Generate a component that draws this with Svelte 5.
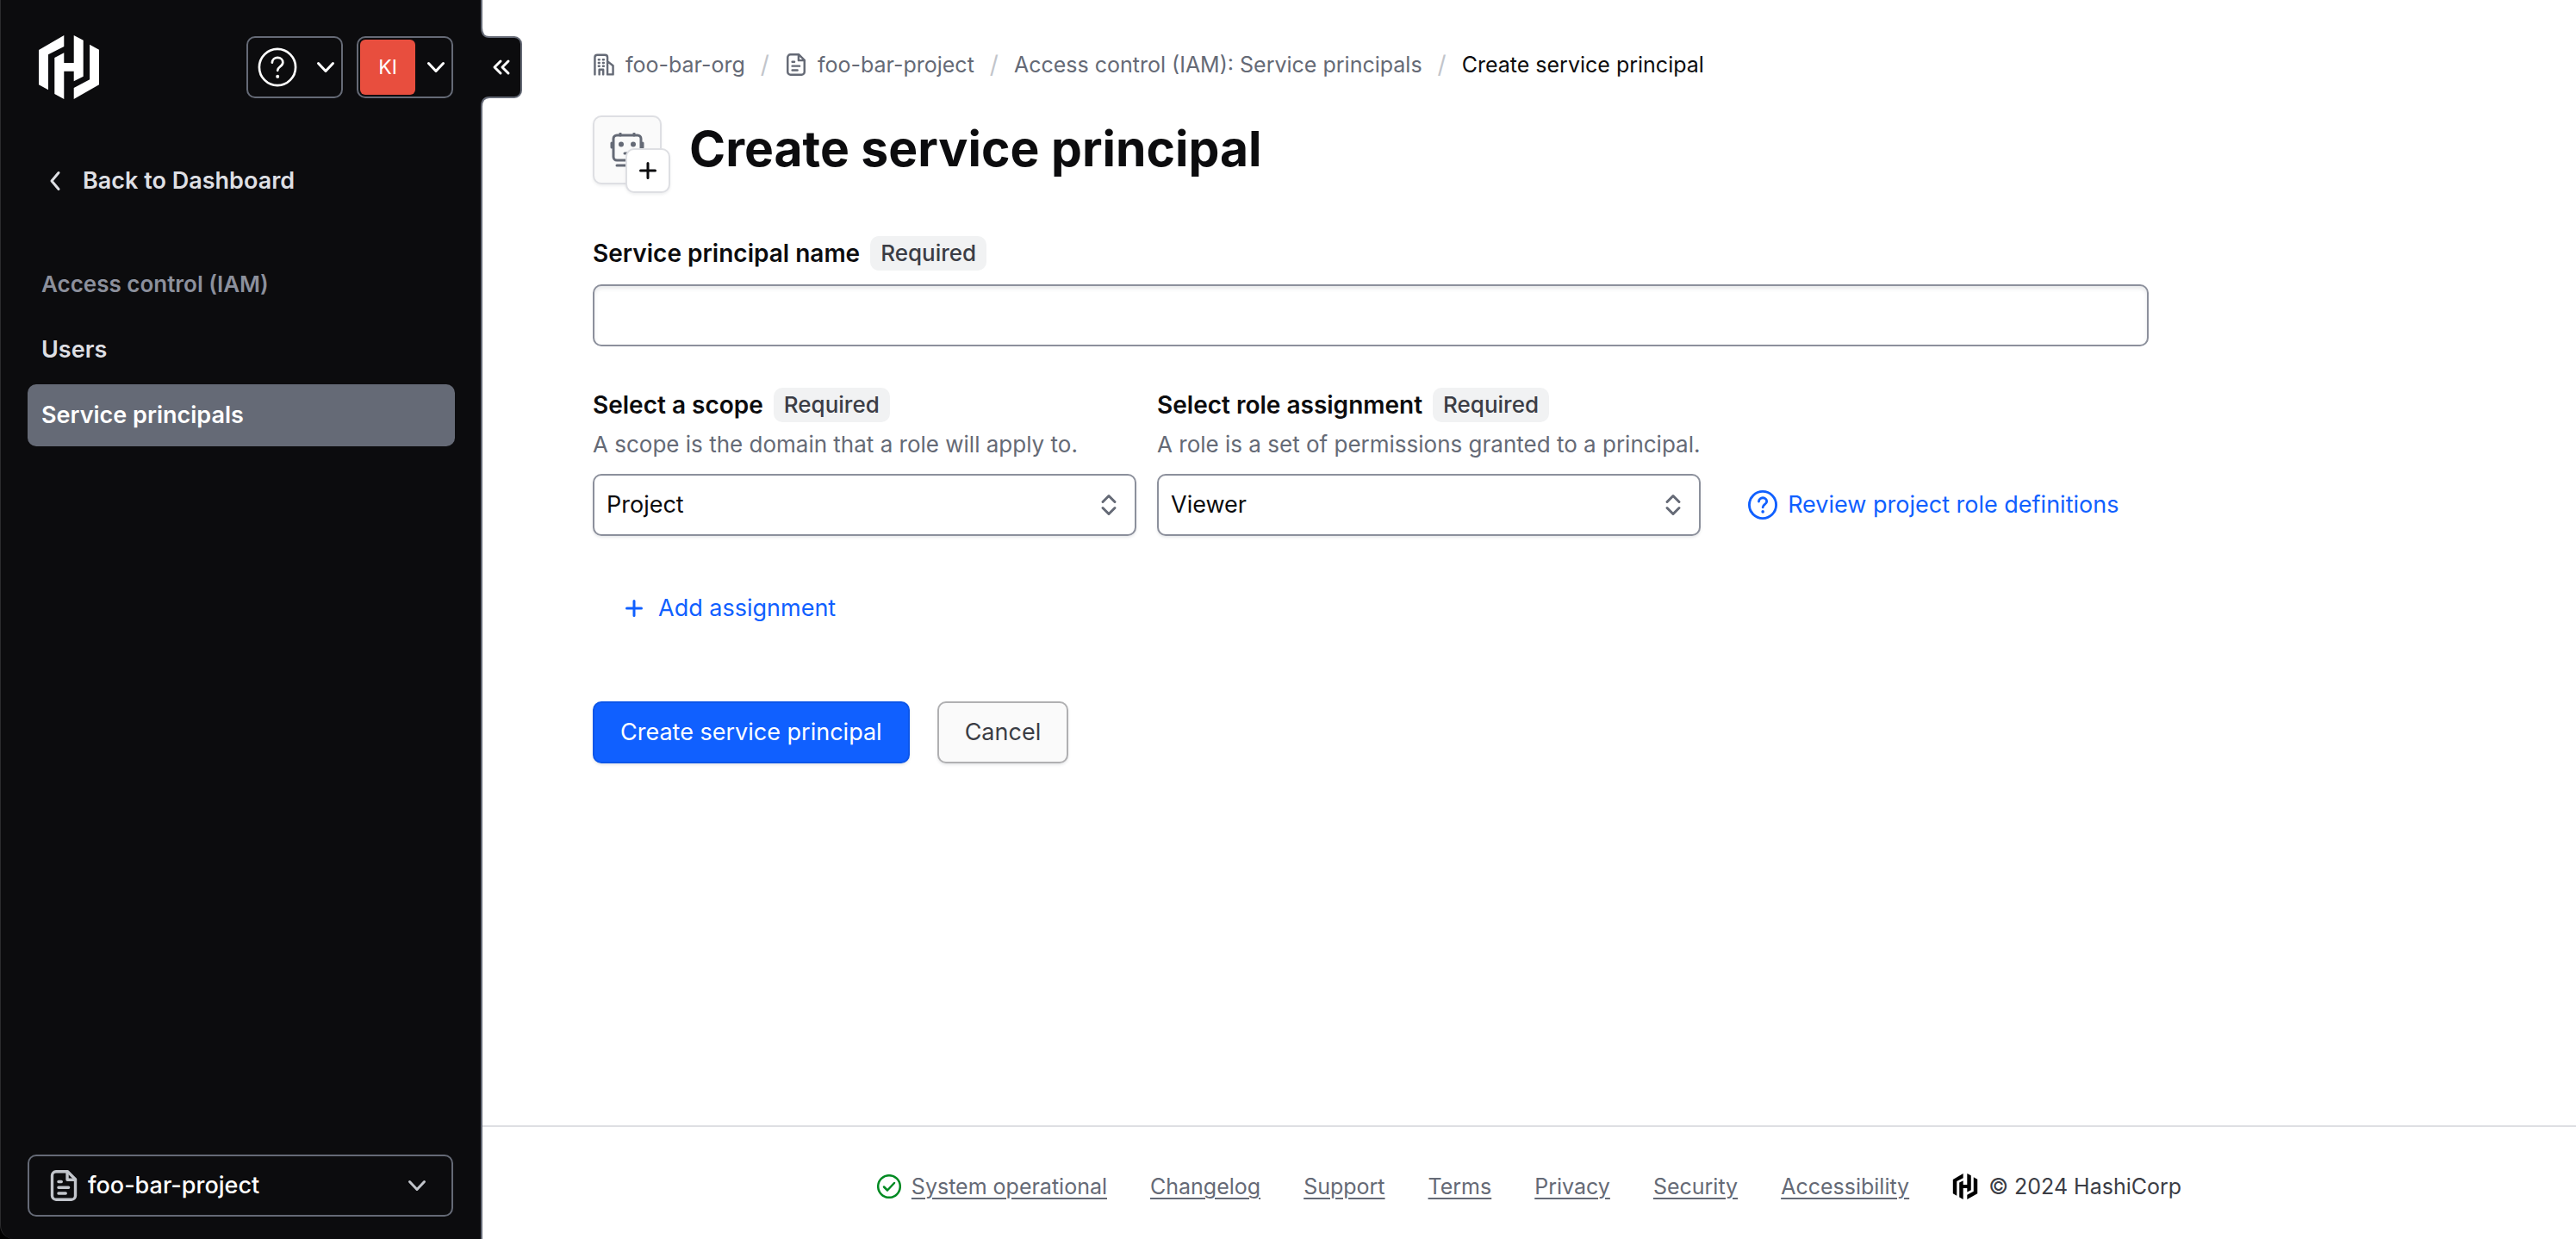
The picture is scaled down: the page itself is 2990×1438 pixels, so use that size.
<script>
  const footerLinks = ['Changelog', 'Support', 'Terms', 'Privacy', 'Security', 'Accessibility'];
  let name = $state('');
  let scope = $state('Project');
  let role = $state('Viewer');
</script>

{#snippet chevron()}
  <svg class="chevron" viewBox="0 0 24 24" aria-hidden="true"><path d="M3.5 7.5 12 16.5l8.5-9" /></svg>
{/snippet}

{#snippet logo()}
  <path d="M29.3 0 0 17v40.3l11 6V22.3L29.3 13z" />
  <path d="M18.3 26l11-5.7V32h11.4V0l11 5.7v42l-11 5.6V41.7H29.3V74l-11-6z" />
  <path d="M59.1 10.7l11 6v40.6L40.7 74V61l18.4-9.7z" />
{/snippet}

{#snippet fileIcon()}
  <path d="M10 .8H4C2.900.8 2 1.7 2 2.8v10.4c0 1.1.9 2 2 2h8c1.1 0 2-.9 2-2V4.8z" />
  <path d="M9.8 1v4H14M5.3 6h1.5M5.3 9h5.2M5.3 12H9" />
{/snippet}

{#snippet helpIcon()}
  <circle cx="12" cy="12" r="11" />
  <path d="M8.8 9.2c.1-1.8 1.5-3 3.3-3s3.2 1.2 3.2 2.9c0 2.5-3.2 2.5-3.2 4.9" />
  <path class="dot" d="M12.1 17.5v.2" />
{/snippet}

{#snippet selector()}
  <svg class="updown" viewBox="0 0 32 32" aria-hidden="true"><path d="M9 12.500l7-7 7 7M9 19.500l7 7 7-7" /></svg>
{/snippet}

<div class="app">
  <aside class="sidebar">
    <div class="top">
      <a class="home" href="#home" aria-label="HashiCorp home">
        <svg viewBox="0 0 70 74" aria-hidden="true">{@render logo()}</svg>
      </a>
      <button class="menu help" type="button" aria-label="Help menu">
        <svg class="help-icon" viewBox="0 0 24 24" aria-hidden="true">{@render helpIcon()}</svg>
        {@render chevron()}
      </button>
      <button class="menu user" type="button" aria-label="User menu">
        <span class="avatar">KI</span>
        {@render chevron()}
      </button>
    </div>

    <button class="toggle" type="button" aria-label="Close menu">
      <svg class="tab" viewBox="0 0 48 92" aria-hidden="true">
        <path class="fill" d="M0 0h1c0 7 3 11 9 11h29a8 8 0 0 1 8 8v54a8 8 0 0 1-8 8H10c-6 0-9 4-9 11H0z" />
        <path class="edge" d="M1 0c0 7 3 11 9 11h29a8 8 0 0 1 8 8v54a8 8 0 0 1-8 8H10c-6 0-9 4-9 11" />
        <path class="arrows" d="M23 39l-7 7 7 7M32 39l-7 7 7 7" />
      </svg>
    </button>

    <nav aria-label="Main">
      <a class="item back" href="#dashboard">
        <svg viewBox="0 0 24 24" aria-hidden="true"><path d="M16 2.5 8 12l8 9.5" /></svg>
        Back to Dashboard
      </a>
      <h2 class="item">Access control (IAM)</h2>
      <a class="item" href="#users">Users</a>
      <a class="item active" href="#service-principals" aria-current="page">Service principals</a>
    </nav>

    <button class="project" type="button">
      <svg class="file" viewBox="0 0 16 16" aria-hidden="true">{@render fileIcon()}</svg>
      <span>foo-bar-project</span>
      {@render chevron()}
    </button>
  </aside>

  <div class="page">
    <main>
      <nav class="crumbs" aria-label="Breadcrumb">
        <a href="#org">
          <svg viewBox="0 0 16 16" aria-hidden="true">
            <path d="M1.5 15V2.8C1.5 1.8 2.2 1.1 3.2 1.1h5.6c1 0 1.7.7 1.7 1.7V15M10.5 6.2h.8l3.2 2.6V15h-4M4.7 15v-3.5h2.8V15" />
            <path d="M4.2 4.5h.6M7.3 4.5h.6M4.2 6.8h.6M7.3 6.8h.6M4.2 9.1h.6M7.3 9.1h.6" />
          </svg>
          foo-bar-org
        </a>
        <span class="slash">/</span>
        <a href="#project">
          <svg viewBox="0 0 16 16" aria-hidden="true">{@render fileIcon()}</svg>
          foo-bar-project
        </a>
        <span class="slash">/</span>
        <a href="#iam">Access control (IAM): Service principals</a>
        <span class="slash">/</span>
        <span class="current" aria-current="page">Create service principal</span>
      </nav>

      <header class="title">
        <div class="tile">
          <div class="robot">
            <svg viewBox="0 0 40 40" aria-hidden="true">
              <rect x="4" y="3" width="32" height="29" rx="4" />
              <path d="M2 12v5M38 12v5M12 1v2M28 1v2M17 24h6M8 38h24" />
              <circle cx="13" cy="13.5" r="1.5" />
              <circle cx="27" cy="13.5" r="1.5" />
            </svg>
          </div>
          <div class="plus">
            <svg viewBox="0 0 24 24" aria-hidden="true"><path d="M12 3.5v17M3.5 12h17" /></svg>
          </div>
        </div>
        <h1>Create service principal</h1>
      </header>

      <form>
        <div class="field">
          <div class="label"><label for="name">Service principal name</label><span class="badge">Required</span></div>
          <input id="name" type="text" bind:value={name} />
        </div>

        <div class="roles">
          <div class="field">
            <div class="label"><label for="scope">Select a scope</label><span class="badge">Required</span></div>
            <p id="scope-hint">A scope is the domain that a role will apply to.</p>
            <div class="select">
              <select id="scope" aria-describedby="scope-hint" bind:value={scope}>
                <option>Project</option>
                <option>Organization</option>
              </select>
              {@render selector()}
            </div>
          </div>
          <div class="field">
            <div class="label"><label for="role">Select role assignment</label><span class="badge">Required</span></div>
            <p id="role-hint">A role is a set of permissions granted to a principal.</p>
            <div class="select">
              <select id="role" aria-describedby="role-hint" bind:value={role}>
                <option>Viewer</option>
                <option>Contributor</option>
                <option>Admin</option>
              </select>
              {@render selector()}
            </div>
          </div>
          <a class="review" href="#roles">
            <svg viewBox="0 0 24 24" aria-hidden="true">{@render helpIcon()}</svg>
            Review project role definitions
          </a>
        </div>

        <button class="add" type="button">
          <svg viewBox="0 0 24 24" aria-hidden="true"><path d="M12 3.5v17M3.5 12h17" /></svg>
          Add assignment
        </button>

        <div class="actions">
          <button class="btn primary" type="submit">Create service principal</button>
          <button class="btn" type="button">Cancel</button>
        </div>
      </form>
    </main>

    <footer>
      <a class="status" href="#status">
        <svg viewBox="0 0 28 28" aria-hidden="true"><circle cx="14" cy="14" r="12.8" /><path d="M8 14.5l4 4 8-8.5" /></svg>
        <span>System operational</span>
      </a>
      {#each footerLinks as link}
        <a href="#{link.toLowerCase()}">{link}</a>
      {/each}
      <span class="copyright">
        <svg viewBox="0 0 70 74" aria-hidden="true">{@render logo()}</svg>
        © 2024 HashiCorp
      </span>
    </footer>
  </div>
</div>

<style>
  :global(body) {
    margin: 0;
    background: #fff;
  }

  .app {
    display: flex;
    min-height: 100vh;
    background: #000;
    font-family: Inter, 'Liberation Sans', sans-serif;
    font-size: 27px;
    line-height: 36px;
    color: #0c0c0e;
  }

  .app :is(*, *::before) {
    box-sizing: border-box;
  }

  svg {
    display: block;
    flex: none;
    fill: none;
    stroke: currentColor;
    stroke-linecap: round;
    stroke-linejoin: round;
  }

  a {
    color: inherit;
    text-decoration: none;
  }

  button,
  input,
  select {
    margin: 0;
    font: inherit;
    color: inherit;
  }

  button {
    cursor: pointer;
  }

  .dot {
    stroke-width: 2.5;
  }

  /* Sidebar */
  .sidebar {
    position: relative;
    display: flex;
    flex: none;
    flex-direction: column;
    width: 560px;
    padding: 42px 32px 26px 31px;
    border-right: 2px solid #656a76;
    border-left: 1px solid #2b2b2d;
    border-bottom-left-radius: 16px;
    background: #0c0c0e;
    color: #dedfe3;
  }

  .top {
    display: flex;
    gap: 16px;
    align-items: center;
    height: 72px;
    padding-left: 13px;
  }

  .home {
    margin-right: auto;
    color: #fff;
  }

  .home svg {
    width: 70px;
    height: 74px;
    fill: currentColor;
    stroke: none;
  }

  .menu {
    display: flex;
    align-items: center;
    justify-content: space-between;
    width: 112px;
    height: 72px;
    padding: 0 6px 0 11px;
    border: 2px solid #656a76;
    border-radius: 10px;
    background: none;
    color: #fff;
  }

  .user {
    padding-left: 2px;
  }

  .help-icon {
    width: 46px;
    height: 46px;
    stroke-width: 1.4;
  }

  .help-icon .dot {
    stroke-width: 2;
  }

  .chevron {
    width: 24px;
    height: 24px;
    stroke-width: 3;
  }

  .avatar {
    display: grid;
    place-items: center;
    width: 64px;
    height: 64px;
    border-radius: 6px;
    background: #e84e3e;
    font-size: 23px;
  }

  .toggle {
    position: absolute;
    top: 32px;
    left: 557px;
    padding: 0;
    border: 0;
    background: none;
    color: #fff;
  }

  .tab {
    width: 48px;
    height: 92px;
    stroke-width: 2;
  }

  .tab .fill {
    fill: #0c0c0e;
    stroke: none;
  }

  .tab .edge {
    stroke: #656a76;
  }

  .tab .arrows {
    stroke-width: 3;
  }

  .sidebar nav {
    display: flex;
    flex: 1;
    flex-direction: column;
    gap: 4px;
    padding-top: 60px;
  }

  .item {
    display: flex;
    align-items: center;
    height: 72px;
    margin: 0;
    padding: 0 16px;
    border-radius: 10px;
    font-size: 27px;
    font-weight: 600;
    white-space: nowrap;
  }

  .back {
    gap: 20px;
    margin-bottom: 44px;
    padding-left: 20px;
  }

  .back svg {
    width: 24px;
    height: 24px;
    stroke-width: 3;
  }

  h2.item {
    color: #8c909c;
    font-size: 26px;
  }

  .active {
    margin-right: -2px;
    background: #656a76;
    color: #fff;
  }

  .project {
    display: flex;
    align-items: center;
    height: 72px;
    padding: 0 28px 0 22px;
    border: 2px solid #656a76;
    border-radius: 10px;
    background: none;
    color: #c2c5cb;
  }

  .project span {
    flex: 1;
    color: #fff;
    font-weight: 500;
    text-align: left;
  }

  .file {
    width: 36px;
    height: 36px;
    margin-right: 10px;
    stroke-width: 1.5;
  }

  /* Page */
  .page {
    display: flex;
    flex: 1;
    flex-direction: column;
    min-width: 0;
    background: #fff;
  }

  main {
    flex: 1;
    max-width: 2062px;
    padding: 56px 128px;
  }

  .crumbs {
    display: flex;
    gap: 18px;
    align-items: center;
    height: 38px;
    color: #656a76;
    font-size: 25px;
    white-space: nowrap;
  }

  .crumbs a {
    display: flex;
    gap: 12px;
    align-items: center;
  }

  .crumbs svg {
    width: 26px;
    height: 26px;
    stroke-width: 1.5;
  }

  .slash {
    color: #c2c5cb;
    font-size: 28px;
  }

  .current {
    color: #0c0c0e;
  }

  .title {
    display: flex;
    gap: 22px;
    margin: 40px 0 50px;
  }

  .tile {
    position: relative;
    width: 90px;
    height: 90px;
  }

  .robot,
  .plus {
    display: grid;
    place-items: center;
    border: 2px solid #dedfe3;
    border-radius: 10px;
    box-shadow: 0 2px 3px #656a761a;
  }

  .robot {
    width: 80px;
    height: 80px;
    background: #fafafa;
    color: #656a76;
  }

  .robot svg {
    width: 40px;
    height: 40px;
    stroke-width: 3;
  }

  .plus {
    position: absolute;
    right: 0;
    bottom: 0;
    width: 52px;
    height: 52px;
    background: #fff;
  }

  .plus svg {
    width: 24px;
    height: 24px;
    stroke-width: 3;
  }

  h1 {
    margin: 0;
    font-size: 57px;
    font-weight: 700;
    line-height: 78px;
  }

  form,
  .field {
    display: flex;
    flex-direction: column;
  }

  form {
    gap: 48px;
  }

  .label {
    display: flex;
    gap: 12px;
    align-items: center;
    height: 40px;
    margin-bottom: 16px;
    font-size: 28px;
    font-weight: 600;
    white-space: nowrap;
  }

  .badge {
    padding: 2px 12px;
    border-radius: 10px;
    background: #f1f2f3;
    color: #3b3d45;
    font-size: 26px;
    font-weight: 500;
  }

  input,
  select {
    width: 100%;
    height: 72px;
    padding: 0 14px;
    border: 2px solid #8c909c;
    border-radius: 10px;
    background: #fff;
  }

  input {
    box-shadow: inset 0 3px 4px #656a7626;
  }

  select {
    appearance: none;
    box-shadow: 0 2px 3px #656a7626;
  }

  .roles {
    display: grid;
    grid-template-columns: 14fr 14fr 11fr;
    gap: 24px;
  }

  .roles .label {
    margin-bottom: 8px;
  }

  p {
    margin: 0 0 16px;
    color: #656a76;
    font-size: 26px;
    white-space: nowrap;
  }

  .select {
    position: relative;
  }

  .updown {
    position: absolute;
    top: 20px;
    right: 16px;
    width: 32px;
    height: 32px;
    color: #656a76;
    stroke-width: 3;
    pointer-events: none;
  }

  .review {
    display: flex;
    gap: 12px;
    align-items: center;
    align-self: end;
    height: 72px;
    padding-left: 31px;
    color: #1060ff;
    white-space: nowrap;
  }

  .review svg {
    width: 34px;
    height: 34px;
    stroke-width: 2;
  }

  .add {
    display: flex;
    gap: 16px;
    align-items: center;
    align-self: flex-start;
    height: 72px;
    padding: 0 36px;
    border: 0;
    background: none;
    color: #1060ff;
  }

  .add svg {
    width: 24px;
    height: 24px;
    stroke-width: 3;
  }

  .actions {
    display: flex;
    gap: 32px;
    margin-top: 24px;
  }

  .btn {
    height: 72px;
    padding: 0 30px;
    border: 2px solid #b0b0b2;
    border-radius: 10px;
    background: #fafafa;
    box-shadow: 0 2px 3px #656a7626;
    color: #3b3d45;
  }

  .primary {
    border-color: #0c56e9;
    background: #1060ff;
    color: #fff;
  }

  footer {
    display: flex;
    gap: 50px;
    align-items: center;
    justify-content: center;
    height: 132px;
    padding-top: 8px;
    border-top: 2px solid #dedfe3;
    color: #656a76;
    font-size: 25px;
    white-space: nowrap;
  }

  footer a {
    text-decoration: underline;
    text-decoration-thickness: 2px;
    text-underline-offset: 4px;
  }

  .status,
  .copyright {
    display: flex;
    gap: 12px;
    align-items: center;
  }

  .status {
    text-decoration: none;
  }

  .status span {
    text-decoration: underline;
    text-decoration-thickness: 2px;
    text-underline-offset: 4px;
  }

  .status svg {
    width: 28px;
    height: 28px;
    color: #008a22;
    stroke-width: 2.5;
  }

  .copyright {
    color: #3b3d45;
  }

  .copyright svg {
    width: 30px;
    height: 30px;
    fill: #000;
    stroke: none;
  }
</style>
